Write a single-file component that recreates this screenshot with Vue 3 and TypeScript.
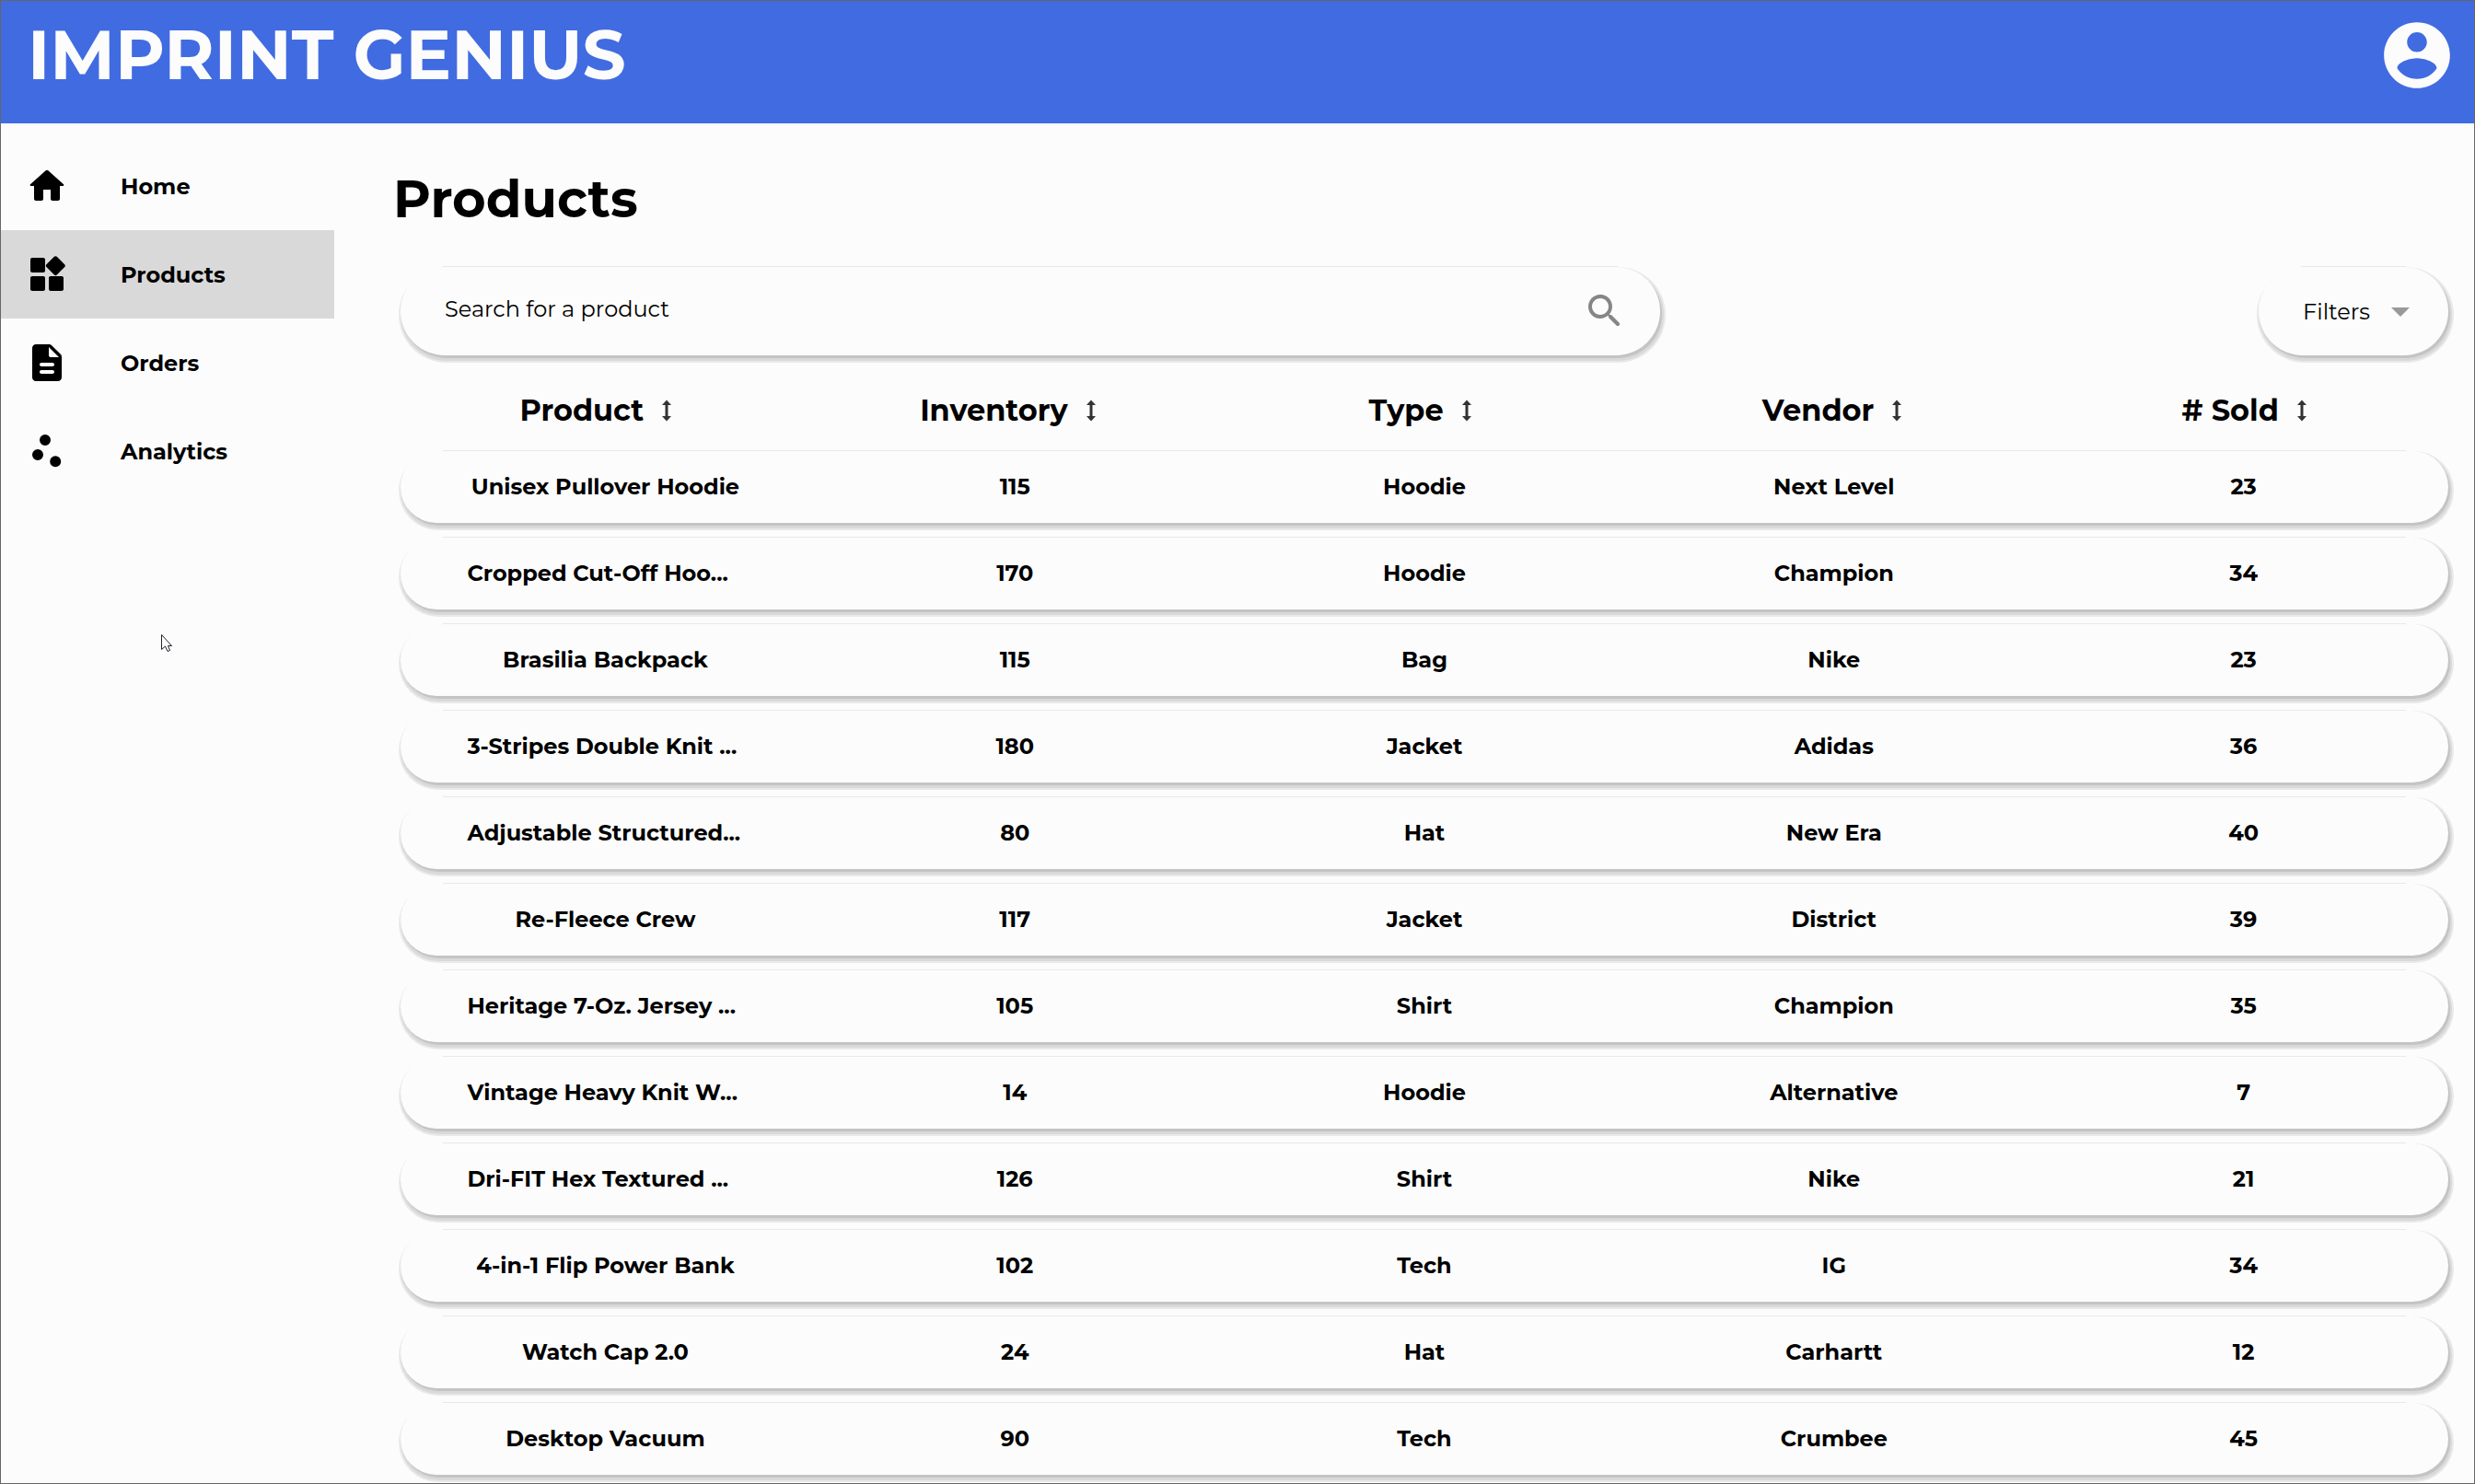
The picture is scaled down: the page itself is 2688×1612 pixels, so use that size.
<script setup lang="ts">
import { computed, ref } from 'vue'

interface Product {
  name: string
  inventory: number
  type: string
  vendor: string
  sold: number
}

type SortKey = keyof Product

const navItems = [
  {
    label: 'Home',
    path: 'M10 19v-5h4v5c0 .55.45 1 1 1h3c.55 0 1-.45 1-1v-7h1.7c.46 0 .68-.57.33-.87L12.67 3.6c-.38-.34-.96-.34-1.34 0l-8.36 7.53c-.34.3-.13.87.33.87H5v7c0 .55.45 1 1 1h3c.55 0 1-.45 1-1z',
  },
  {
    label: 'Products',
    path: 'M13 14v6c0 .55.45 1 1 1h6c.55 0 1-.45 1-1v-6c0-.55-.45-1-1-1h-6c-.55 0-1 .45-1 1zm-9 7h6c.55 0 1-.45 1-1v-6c0-.55-.45-1-1-1H4c-.55 0-1 .45-1 1v6c0 .55.45 1 1 1zM3 4v6c0 .55.45 1 1 1h6c.55 0 1-.45 1-1V4c0-.55-.45-1-1-1H4c-.55 0-1 .45-1 1zm12.95-1.6L11.7 6.64c-.39.39-.39 1.02 0 1.41l4.25 4.25c.39.39 1.02.39 1.41 0l4.25-4.25c.39-.39.39-1.02 0-1.41L17.37 2.4c-.39-.39-1.03-.39-1.42 0z',
  },
  {
    label: 'Orders',
    path: 'M14.59 2.59c-.38-.38-.89-.59-1.42-.59H6c-1.1 0-2 .9-2 2v16c0 1.1.9 2 2 2h12c1.1 0 2-.9 2-2V8.83c0-.53-.21-1.04-.59-1.41l-4.82-4.83zM15 18H9c-.55 0-1-.45-1-1s.45-1 1-1h6c.55 0 1 .45 1 1s-.45 1-1 1zm0-4H9c-.55 0-1-.45-1-1s.45-1 1-1h6c.55 0 1 .45 1 1s-.45 1-1 1zm-2-6V3.5L18.5 9H14c-.55 0-1-.45-1-1z',
  },
  {
    label: 'Analytics',
    path: 'M4 14a3 3 0 1 0 6 0a3 3 0 1 0-6 0zM8 6a3 3 0 1 0 6 0a3 3 0 1 0-6 0zM13.6 17.6a3 3 0 1 0 6 0a3 3 0 1 0-6 0z',
  },
]

const activeItem = ref('Products')
const query = ref('')
const sortKey = ref<SortKey | null>(null)

const columns: { key: SortKey; label: string }[] = [
  { key: 'name', label: 'Product' },
  { key: 'inventory', label: 'Inventory' },
  { key: 'type', label: 'Type' },
  { key: 'vendor', label: 'Vendor' },
  { key: 'sold', label: '# Sold' },
]

const products: Product[] = [
  { name: 'Unisex Pullover Hoodie', inventory: 115, type: 'Hoodie', vendor: 'Next Level', sold: 23 },
  { name: 'Cropped Cut-Off Hoo...', inventory: 170, type: 'Hoodie', vendor: 'Champion', sold: 34 },
  { name: 'Brasilia Backpack', inventory: 115, type: 'Bag', vendor: 'Nike', sold: 23 },
  { name: '3-Stripes Double Knit ...', inventory: 180, type: 'Jacket', vendor: 'Adidas', sold: 36 },
  { name: 'Adjustable Structured...', inventory: 80, type: 'Hat', vendor: 'New Era', sold: 40 },
  { name: 'Re-Fleece Crew', inventory: 117, type: 'Jacket', vendor: 'District', sold: 39 },
  { name: 'Heritage 7-Oz. Jersey ...', inventory: 105, type: 'Shirt', vendor: 'Champion', sold: 35 },
  { name: 'Vintage Heavy Knit W...', inventory: 14, type: 'Hoodie', vendor: 'Alternative', sold: 7 },
  { name: 'Dri-FIT Hex Textured ...', inventory: 126, type: 'Shirt', vendor: 'Nike', sold: 21 },
  { name: '4-in-1 Flip Power Bank', inventory: 102, type: 'Tech', vendor: 'IG', sold: 34 },
  { name: 'Watch Cap 2.0', inventory: 24, type: 'Hat', vendor: 'Carhartt', sold: 12 },
  { name: 'Desktop Vacuum', inventory: 90, type: 'Tech', vendor: 'Crumbee', sold: 45 },
]

const visibleProducts = computed(() => {
  const text = query.value.toLowerCase()
  const rows = products.filter((p) => p.name.toLowerCase().includes(text))
  const key = sortKey.value
  if (key) rows.sort((a, b) => (a[key] > b[key] ? 1 : a[key] < b[key] ? -1 : 0))
  return rows
})

const isShortened = (name: string) => name.endsWith('...')
</script>

<template>
  <div class="page">
    <header class="topbar">
      <span class="brand">IMPRINT GENIUS</span>
      <button class="account" type="button" aria-label="Account">
        <svg viewBox="0 0 24 24" aria-hidden="true">
          <path d="M12 2C6.48 2 2 6.48 2 12s4.48 10 10 10 10-4.48 10-10S17.52 2 12 2zm0 3c1.66 0 3 1.34 3 3s-1.34 3-3 3-3-1.34-3-3 1.34-3 3-3zm0 14.2c-2.5 0-4.71-1.28-6-3.22.03-1.99 4-3.08 6-3.08 1.99 0 5.97 1.09 6 3.08-1.29 1.94-3.5 3.22-6 3.22z" />
        </svg>
      </button>
    </header>

    <div class="body">
      <nav class="sidebar">
        <a
          v-for="item in navItems"
          :key="item.label"
          href="#"
          class="nav-link"
          :class="{ active: item.label === activeItem }"
          @click.prevent="activeItem = item.label"
        >
          <svg class="icon" viewBox="0 0 24 24" aria-hidden="true"><path :d="item.path" /></svg>
          <span>{{ item.label }}</span>
        </a>
      </nav>

      <main class="content">
        <h1 class="title">Products</h1>

        <div class="tools">
          <label class="pill search">
            <input v-model="query" type="text" placeholder="Search for a product" aria-label="Search for a product" />
            <svg class="icon" viewBox="0 0 24 24" aria-hidden="true">
              <path d="M15.5 14h-.79l-.28-.27c1.2-1.4 1.82-3.31 1.48-5.34-.47-2.78-2.79-5-5.59-5.34-4.23-.52-7.79 3.04-7.27 7.27.34 2.8 2.56 5.12 5.34 5.59 2.03.34 3.94-.28 5.34-1.48l.27.28v.79l4.25 4.25c.41.41 1.08.41 1.49 0 .41-.41.41-1.08 0-1.49L15.5 14zm-6 0C7.01 14 5 11.99 5 9.5S7.01 5 9.5 5 14 7.01 14 9.5 11.99 14 9.5 14z" />
            </svg>
          </label>
          <button class="pill filters" type="button">
            <span>Filters</span>
            <svg class="icon" viewBox="0 0 24 24" aria-hidden="true"><path d="M7 10l5 5 5-5z" /></svg>
          </button>
        </div>

        <table class="table">
          <thead>
            <tr class="head-row">
              <th v-for="col in columns" :key="col.key" scope="col">
                <button type="button" class="sort" @click="sortKey = col.key">
                  <span>{{ col.label }}</span>
                  <svg viewBox="0 0 10 24" aria-hidden="true">
                    <path d="M5 0.5L10 6H6.5V18H10L5 23.5L0 18H3.5V6H0z" />
                  </svg>
                </button>
              </th>
            </tr>
          </thead>
          <tbody>
            <tr v-for="p in visibleProducts" :key="p.name" class="pill row">
              <td><span class="name" :class="{ shortened: isShortened(p.name) }">{{ p.name }}</span></td>
              <td>{{ p.inventory }}</td>
              <td>{{ p.type }}</td>
              <td>{{ p.vendor }}</td>
              <td>{{ p.sold }}</td>
            </tr>
          </tbody>
        </table>
      </main>
    </div>

    <svg class="cursor" viewBox="0 0 12 19" aria-hidden="true">
      <path d="M0.5 0.5V16.5L4.5 13L7 18.5L9.5 17.5L7.5 12.5H11.5Z" />
    </svg>
  </div>
</template>

<style>
body {
  margin: 0;
}
</style>

<style scoped>
.page {
  position: relative;
  box-sizing: border-box;
  min-height: 100vh;
  border: 1px solid #666;
  background: #fcfcfc;
  color: #000;
  font-family: Montserrat, Inter, 'Liberation Sans', sans-serif;
  font-size: 24px;
  font-weight: 700;
}

button {
  padding: 0;
  border: 0;
  background: none;
  color: inherit;
  font: inherit;
  cursor: pointer;
}

.icon {
  flex: none;
  width: 48px;
  height: 48px;
  fill: currentColor;
}

.topbar {
  display: flex;
  align-items: flex-start;
  justify-content: space-between;
  box-sizing: border-box;
  height: 133px;
  padding: 16px 19px 0 29px;
  background: #416be1;
  color: #fcfcfc;
}

.brand {
  font-size: 74px;
  line-height: 86px;
}

.account {
  width: 86px;
  height: 86px;
}

.account svg {
  display: block;
  fill: currentColor;
}

.body {
  display: flex;
}

.sidebar {
  flex: none;
  width: 362px;
  padding-top: 20px;
}

.nav-link {
  display: flex;
  align-items: center;
  gap: 56px;
  height: 96px;
  padding-left: 26px;
  color: inherit;
  text-decoration: none;
}

.nav-link.active {
  background: #d9d9d9;
}

.content {
  flex: 1;
  min-width: 0;
  padding: 42px 28px 8px 72px;
}

.title {
  margin: 0 0 34px -8px;
  font-size: 56px;
  line-height: 80px;
}

.pill {
  position: relative;
  border-radius: 48px;
  background: #fcfcfc;
  box-shadow:
    2px 3px 0 0 #c4c4c4,
    2px 4px 0 2px #d9d9d9,
    2px 4px 0 4px #e9e9e9;
}

.pill::before {
  position: absolute;
  top: -1px;
  right: 46px;
  left: 46px;
  height: 1px;
  background: #e9e9e9;
  content: '';
}

.tools {
  display: flex;
  justify-content: space-between;
}

.search {
  display: flex;
  align-items: center;
  box-sizing: border-box;
  width: 61.5%;
  height: 96px;
  padding: 0 36px 0 48px;
}

.search input {
  flex: 1;
  min-width: 0;
  padding: 0 0 6px;
  border: 0;
  outline: 0;
  background: none;
  color: #000;
  font: inherit;
  font-weight: 400;
}

.search input::placeholder {
  color: #000;
  opacity: 1;
}

.search .icon {
  color: #868686;
}

.filters {
  display: flex;
  align-items: center;
  justify-content: space-between;
  box-sizing: border-box;
  width: 206px;
  height: 96px;
  padding: 0 28px 0 48px;
  font-weight: 400;
}

.filters .icon {
  color: #999;
}

.table {
  display: block;
}

.table thead {
  display: block;
}

.table tbody {
  display: flex;
  flex-direction: column;
  gap: 16px;
}

.head-row,
.row {
  display: grid;
  grid-template-columns: repeat(5, 1fr);
  align-items: center;
}

.head-row {
  height: 104px;
  margin-right: -14px;
}

.head-row th {
  display: flex;
  justify-content: center;
  padding: 16px 0 0;
}

.sort {
  display: flex;
  align-items: center;
  gap: 20px;
  padding-right: 24px;
  font-size: 32px;
  line-height: 40px;
}

.sort svg {
  width: 10px;
  height: 24px;
  fill: #333;
}

.row {
  height: 78px;
}

.row td {
  padding: 0 0 2px;
  text-align: center;
}

.name {
  display: block;
  width: 300px;
  margin: 0 auto;
  white-space: nowrap;
}

.name.shortened {
  text-align: left;
}

.cursor {
  position: absolute;
  top: 688px;
  left: 174px;
  width: 12px;
  height: 19px;
  fill: #fff;
  stroke: #223;
}
</style>
